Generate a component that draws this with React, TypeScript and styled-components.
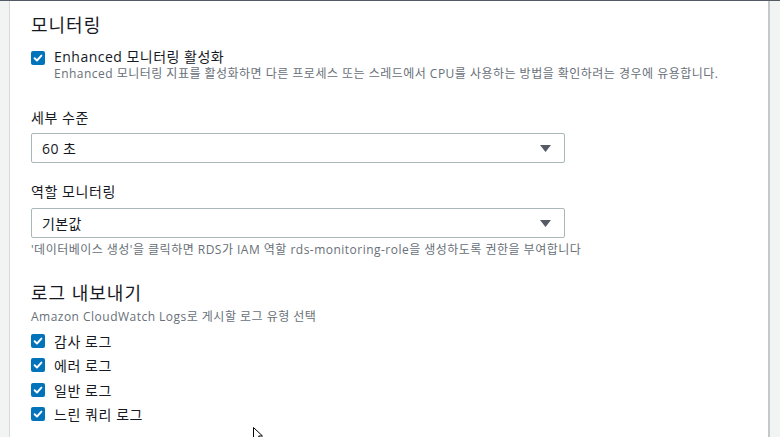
import React from "react";
import styled, { createGlobalStyle } from "styled-components";

const Global = createGlobalStyle`
  html, body { margin: 0; padding: 0; background: #f2f3f3; }
  body { font-family: "Open Sans", "Noto Sans CJK KR", sans-serif; color: #16191f; }
  * { box-sizing: border-box; }
`;

const Page = styled.div`
  display: flex;
  height: 437px;
  width: 780px;
  border-top: 1px solid #545b64;
  position: relative;
  overflow: hidden;
`;

const SideStrip = styled.div`
  width: 10px;
  background: #f2f3f3;
  border-right: 1px solid #d5dbdb;
`;

const Card = styled.main`
  width: 760px;
  background: #ffffff;
  border-right: 2px solid #c4c9cc;
  padding: 12px 0 0 21px;
  display: flex;
  flex-direction: column;
`;

const RightStrip = styled.div`
  flex: 1;
  background: #f2f3f3;
`;

const Heading = styled.h2<{ $mt?: number }>`
  margin: ${(p) => p.$mt ?? 0}px 0 0;
  font-size: 18px;
  line-height: 24px;
  font-weight: 400;
  letter-spacing: 0.055em;
  color: #16191f;
`;

const CheckRow = styled.label<{ $h?: number }>`
  display: flex;
  align-items: center;
  gap: 9px;
  height: ${(p) => p.$h ?? 24.5}px;
  font-size: 14px;
  letter-spacing: 0.04em;
`;

const CheckBlock = styled.div`
  display: flex;
  gap: 9px;
  margin-top: 11px;
`;

const CheckText = styled.div`
  display: flex;
  flex-direction: column;
`;

const CheckLabel = styled.span`
  font-size: 14px;
  line-height: 18px;
  letter-spacing: 0.035em;
`;

const Box = styled.span<{ $mt?: number }>`
  width: 14px;
  height: 14px;
  flex: none;
  border-radius: 2px;
  background: #0073bb;
  display: inline-flex;
  align-items: center;
  justify-content: center;
  margin-top: ${(p) => p.$mt ?? 0}px;
`;

const Desc = styled.p<{ $mt?: number }>`
  margin: ${(p) => p.$mt ?? 0}px 0 0;
  font-size: 12px;
  line-height: 16px;
  letter-spacing: 0.04em;
  color: #687078;
`;

const FieldLabel = styled.div<{ $mt: number }>`
  margin-top: ${(p) => p.$mt}px;
  font-size: 14px;
  line-height: 20px;
  letter-spacing: 0.04em;
`;

const Select = styled.div<{ $mt: number }>`
  margin-top: ${(p) => p.$mt}px;
  width: 534px;
  height: 30px;
  border: 1px solid #aab7b8;
  border-radius: 2px;
  display: flex;
  align-items: center;
  justify-content: space-between;
  padding: 0 13px 0 10px;
  font-size: 14px;
  letter-spacing: 0.03em;
`;

const Cursor = styled.svg`
  position: absolute;
  left: 253px;
  top: 426px;
`;

const Check = ({ mt }: { mt?: number }) => (
  <Box $mt={mt}>
    <svg width="10" height="10" viewBox="0 0 10 10">
      <path d="M1.6 5.2 L4 7.5 L8.4 2.6" stroke="#fff" strokeWidth="1.9" fill="none" strokeLinecap="round" strokeLinejoin="round" />
    </svg>
  </Box>
);

const Arrow = () => (
  <svg width="11" height="7" viewBox="0 0 11 7">
    <path d="M0 0 H11 L5.5 7 Z" fill="#545b64" />
  </svg>
);

const logs = ["감사 로그", "에러 로그", "일반 로그", "느린 쿼리 로그"];

export default function App() {
  return (
    <>
      <Global />
      <Page>
        <SideStrip />
        <Card>
          <Heading>모니터링</Heading>
          <CheckBlock>
            <Check mt={3} />
            <CheckText>
              <CheckLabel>Enhanced 모니터링 활성화</CheckLabel>
              <Desc>
                Enhanced 모니터링 지표를 활성화하면 다른 프로세스 또는 스레드에서 CPU를 사용하는 방법을 확인하려는 경우에 유용합니다.
              </Desc>
            </CheckText>
          </CheckBlock>
          <FieldLabel $mt={26}>세부 수준</FieldLabel>
          <Select $mt={5}>
            <span>60 초</span>
            <Arrow />
          </Select>
          <FieldLabel $mt={19}>역할 모니터링</FieldLabel>
          <Select $mt={6}>
            <span>기본값</span>
            <Arrow />
          </Select>
          <Desc $mt={4}>
            '데이터베이스 생성'을 클릭하면 RDS가 IAM 역할 rds-monitoring-role을 생성하도록 권한을 부여합니다
          </Desc>
          <Heading $mt={23}>로그 내보내기</Heading>
          <Desc $mt={4}>Amazon CloudWatch Logs로 게시할 로그 유형 선택</Desc>
          <div style={{ marginTop: 3.5 }}>
            {logs.map((l) => (
              <CheckRow key={l}>
                <Check />
                <span>{l}</span>
              </CheckRow>
            ))}
          </div>
        </Card>
        <RightStrip />
        <Cursor width="12" height="14" viewBox="0 0 12 14">
          <path d="M0.5 0.5 L0.5 13 L3.5 10 L6 13.5 L8 12.5 L5.6 9 L9.5 9 Z" fill="#fff" stroke="#000" strokeWidth="1" />
        </Cursor>
      </Page>
    </>
  );
}
